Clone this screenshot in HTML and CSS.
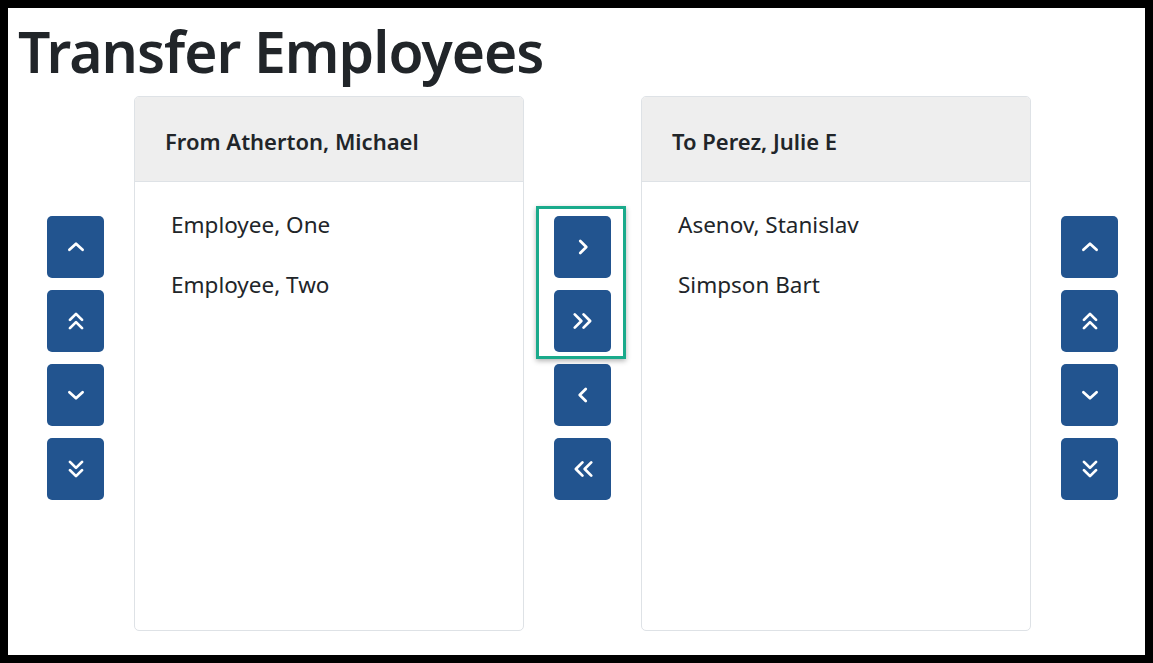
FILE: index.html
```html
<!DOCTYPE html>
<html lang="en">

<head>
    <meta charset="UTF-8">
    <meta name="viewport" content="width=device-width, initial-scale=1.0">
    <title>Transfer Employees</title>
    <link rel="stylesheet" href="styles.css">
</head>

<body>
    <div class="page">
        <h1 class="title">Transfer Employees</h1>
        <div class="transfer">
            <div class="btn-col">
                <button class="btn" title="Move up">
                    <svg viewBox="0 0 20 20"><polyline points="4,12.5 10,7 16,12.5" /></svg>
                </button>
                <button class="btn" title="Move to top">
                    <svg viewBox="0 0 20 20"><polyline points="4.5,9 10,3.5 15.5,9" /><polyline points="4.5,16.5 10,11 15.5,16.5" /></svg>
                </button>
                <button class="btn" title="Move down">
                    <svg viewBox="0 0 20 20"><polyline points="4,7.5 10,13 16,7.5" /></svg>
                </button>
                <button class="btn" title="Move to bottom">
                    <svg viewBox="0 0 20 20"><polyline points="4.5,3.5 10,9 15.5,3.5" /><polyline points="4.5,11 10,16.5 15.5,11" /></svg>
                </button>
            </div>

            <div class="card">
                <div class="card-header">From Atherton, Michael</div>
                <ul class="card-list">
                    <li>Employee, One</li>
                    <li>Employee, Two</li>
                </ul>
            </div>

            <div class="btn-col mid">
                <div class="highlight"></div>
                <button class="btn" title="Move selected right">
                    <svg viewBox="0 0 20 20"><polyline points="7.5,4.5 13,10 7.5,15.5" /></svg>
                </button>
                <button class="btn" title="Move all right">
                    <svg viewBox="0 0 20 20"><polyline points="2.5,4 8.5,10 2.5,16" /><polyline points="10.5,4 16.5,10 10.5,16" /></svg>
                </button>
                <button class="btn" title="Move selected left">
                    <svg viewBox="0 0 20 20"><polyline points="12.5,4.5 7,10 12.5,15.5" /></svg>
                </button>
                <button class="btn" title="Move all left">
                    <svg viewBox="0 0 20 20"><polyline points="9.5,4 3.5,10 9.5,16" /><polyline points="17.5,4 11.5,10 17.5,16" /></svg>
                </button>
            </div>

            <div class="card">
                <div class="card-header">To Perez, Julie E</div>
                <ul class="card-list">
                    <li>Asenov, Stanislav</li>
                    <li>Simpson Bart</li>
                </ul>
            </div>

            <div class="btn-col">
                <button class="btn" title="Move up">
                    <svg viewBox="0 0 20 20"><polyline points="4,12.5 10,7 16,12.5" /></svg>
                </button>
                <button class="btn" title="Move to top">
                    <svg viewBox="0 0 20 20"><polyline points="4.5,9 10,3.5 15.5,9" /><polyline points="4.5,16.5 10,11 15.5,16.5" /></svg>
                </button>
                <button class="btn" title="Move down">
                    <svg viewBox="0 0 20 20"><polyline points="4,7.5 10,13 16,7.5" /></svg>
                </button>
                <button class="btn" title="Move to bottom">
                    <svg viewBox="0 0 20 20"><polyline points="4.5,3.5 10,9 15.5,3.5" /><polyline points="4.5,11 10,16.5 15.5,11" /></svg>
                </button>
            </div>
        </div>
    </div>
</body>

</html>
```

FILE: styles.css
```css
* {
    margin: 0;
    padding: 0;
    box-sizing: border-box;
}

html {
    background: #000;
}

body {
    margin: 8px;
    height: calc(100vh - 16px);
    background: #fff;
    color: #212529;
    font-family: "Noto Sans", "Open Sans", sans-serif;
}

.page {
    padding: 9px 10px 0;
}

.title {
    font-size: 57px;
    font-weight: 600;
    line-height: 1.2;
    letter-spacing: -1px;
    margin-bottom: 11px;
}

.transfer {
    display: flex;
    gap: 30px;
    padding-left: 29px;
}

.btn-col {
    display: flex;
    flex-direction: column;
    gap: 12px;
    padding-top: 120px;
    position: relative;
}

.btn {
    width: 57px;
    height: 62px;
    border: none;
    border-radius: 5px;
    background: #22548f;
    display: flex;
    align-items: center;
    justify-content: center;
}

.btn svg {
    width: 22px;
    height: 22px;
    fill: none;
    stroke: #fff;
    stroke-width: 2.5;
    stroke-linecap: round;
    stroke-linejoin: round;
}

.highlight {
    position: absolute;
    left: -18px;
    top: 110px;
    width: 90px;
    height: 153px;
    border: 3px solid #1aaa8b;
    box-shadow: 0 2px 5px rgba(0, 0, 0, 0.3);
}

.card {
    width: 390px;
    height: 535px;
    border: 1px solid #dee2e6;
    border-radius: 5px;
    overflow: hidden;
}

.card-header {
    height: 85px;
    padding: 4px 30px 0;
    display: flex;
    align-items: center;
    background: #eee;
    border-bottom: 1px solid #dee2e6;
    font-size: 22px;
    font-weight: 600;
}

.card-list {
    list-style: none;
    padding: 13px 36px;
}

.card-list li {
    font-size: 22.5px;
    line-height: 60px;
}
```
